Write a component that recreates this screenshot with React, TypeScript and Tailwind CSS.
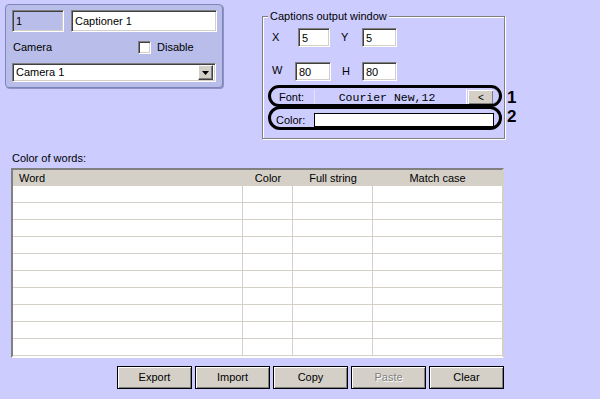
import React from "react";

const sunken =
  "border border-t-[#808080] border-l-[#808080] border-b-white border-r-white shadow-[inset_1px_1px_0_#404040,inset_-1px_-1px_0_#d4d0c8]";
const raised =
  "bg-[#d4d0c8] border border-t-white border-l-white border-b-[#404040] border-r-[#404040] shadow-[inset_-1px_-1px_0_#808080,inset_1px_1px_0_#d4d0c8]";

function Btn({ label, disabled }: { label: string; disabled?: boolean }) {
  return (
    <div className="w-[75px] h-[23px] border border-black bg-[#d4d0c8] shadow-[inset_1px_1px_0_white,inset_-1px_-1px_0_#808080] flex items-center justify-center">
      <span className={disabled ? "text-[#808080] [text-shadow:1px_1px_0_white]" : ""}>{label}</span>
    </div>
  );
}

export default function App() {
  const rows = Array.from({ length: 10 });
  return (
    <div className="relative w-[600px] h-[399px] overflow-hidden bg-[#ccccff] text-[11px] leading-[13px] text-black font-['Liberation_Sans',Arial,sans-serif]">
      <div className="flex h-[140px] items-start">
        {/* left panel */}
        <div className="ml-[5px] mt-[4px] w-[218px] h-[84px] rounded-[4px] border border-[#7f84b8] bg-[#b9bde9] shadow-[1px_1px_0_#8e92c4] pl-[6px] pt-[5px]">
          <div className="flex gap-[7px]">
            <div className={`${sunken} w-[52px] h-[22px] bg-[#b9bde9] pl-[3px] pt-[4px]`}>1</div>
            <div className={`${sunken} w-[146px] h-[22px] bg-white pl-[3px] pt-[4px]`}>Captioner 1</div>
          </div>
          <div className="flex items-center mt-[9px] h-[12px]">
            <span className="ml-[1px] w-[125px]">Camera</span>
            <div className={`${sunken} w-[13px] h-[13px] bg-white`} />
            <span className="ml-[6px]">Disable</span>
          </div>
          <div className={`${sunken} mt-[10px] w-[204px] h-[19px] bg-white flex items-center justify-between pl-[3px] pr-[2px]`}>
            <span>Camera 1</span>
            <div className={`${raised} w-[15px] h-[15px] flex items-center justify-center`}>
              <svg width="7" height="4" viewBox="0 0 7 4">
                <path d="M0 0H7L3.5 4Z" fill="black" />
              </svg>
            </div>
          </div>
        </div>

        {/* group box */}
        <div className="relative ml-[39px] mt-[16px] w-[243px] h-[123px] border border-[#808080] shadow-[inset_1px_1px_0_white,1px_1px_0_white] pl-[9px] pt-[11px]">
          <span className="absolute left-[5px] top-[-7px] bg-[#ccccff] px-[2px]">Captions output window</span>
          <div className="flex items-center h-[19px]">
            <span className="w-[26px]">X</span>
            <div className={`${sunken} w-[32px] h-[19px] bg-white pl-[3px] pt-[3px]`}>5</div>
            <span className="ml-[11px] w-[21px]">Y</span>
            <div className={`${sunken} w-[35px] h-[19px] bg-white pl-[3px] pt-[3px]`}>5</div>
          </div>
          <div className="flex items-center h-[19px] mt-[15px]">
            <span className="w-[23px] -mt-[3px]">W</span>
            <div className={`${sunken} w-[36px] h-[19px] bg-white pl-[3px] pt-[3px]`}>80</div>
            <span className="ml-[11px] w-[20px]">H</span>
            <div className={`${sunken} w-[35px] h-[19px] bg-white pl-[3px] pt-[3px]`}>80</div>
          </div>
          <div className="flex items-center h-[16px] mt-[8px] ml-[-4px] w-[225px]">
            <span className="w-[46px] pl-[11px]">Font:</span>
            <div className="w-px h-[16px] bg-[#e4e4f4]" />
            <div className="w-[151px] text-center pr-[7px] font-['Liberation_Mono','Courier_New',monospace] text-[11.5px]">
              Courier New,12
            </div>
            <div className="w-px h-[16px] bg-white" />
            <div className="ml-px w-[25px] h-[14px] bg-[#d4d0c8] border-l border-t border-white shadow-[inset_-1px_-1px_0_#808080] flex items-center justify-center text-[10px]">
              &lt;
            </div>
          </div>
          <div className="flex items-center h-[14px] mt-[8px] ml-[-4px]">
            <span className="w-[46px] pl-[8px]">Color:</span>
            <div className="w-[180px] h-[14px] border border-black bg-white" />
          </div>
        </div>
      </div>

      {/* annotations */}
      <div className="absolute left-[268px] top-[85px] w-[234px] h-[22px] rounded-full border-[3px] border-black" />
      <div className="absolute left-[268px] top-[106px] w-[234px] h-[24px] rounded-full border-[3px] border-black" />
      <span className="absolute left-[507px] top-[88px] text-[17px] leading-[20px] font-bold">1</span>
      <span className="absolute left-[507px] top-[107px] text-[17px] leading-[20px] font-bold">2</span>

      {/* color of words */}
      <div className="pl-[12px] mt-[12px] h-[13px]">Color of words:</div>
      <div className="ml-[11px] mt-[3px] w-[493px] h-[190px] border-2 border-t-[#808080] border-l-[#808080] border-b-white border-r-[#d4d0c8] bg-white">
        <div className="flex h-[16px] bg-[#d4d0c8] items-center">
          <div className="w-[230px] pl-[6px]">Word</div>
          <div className="w-[50px] text-center">Color</div>
          <div className="w-[80px] text-center">Full string</div>
          <div className="flex-1 text-center">Match case</div>
        </div>
        {rows.map((_, i) => (
          <div key={i} className="flex h-[17px] border-b border-[#d4d0c8]">
            <div className="w-[230px] border-r border-[#d4d0c8]" />
            <div className="w-[50px] border-r border-[#d4d0c8]" />
            <div className="w-[80px] border-r border-[#d4d0c8]" />
            <div className="flex-1" />
          </div>
        ))}
      </div>

      {/* buttons */}
      <div className="flex gap-[3px] ml-[117px] mt-[8px]">
        <Btn label="Export" />
        <Btn label="Import" />
        <Btn label="Copy" />
        <Btn label="Paste" disabled />
        <Btn label="Clear" />
      </div>
    </div>
  );
}
